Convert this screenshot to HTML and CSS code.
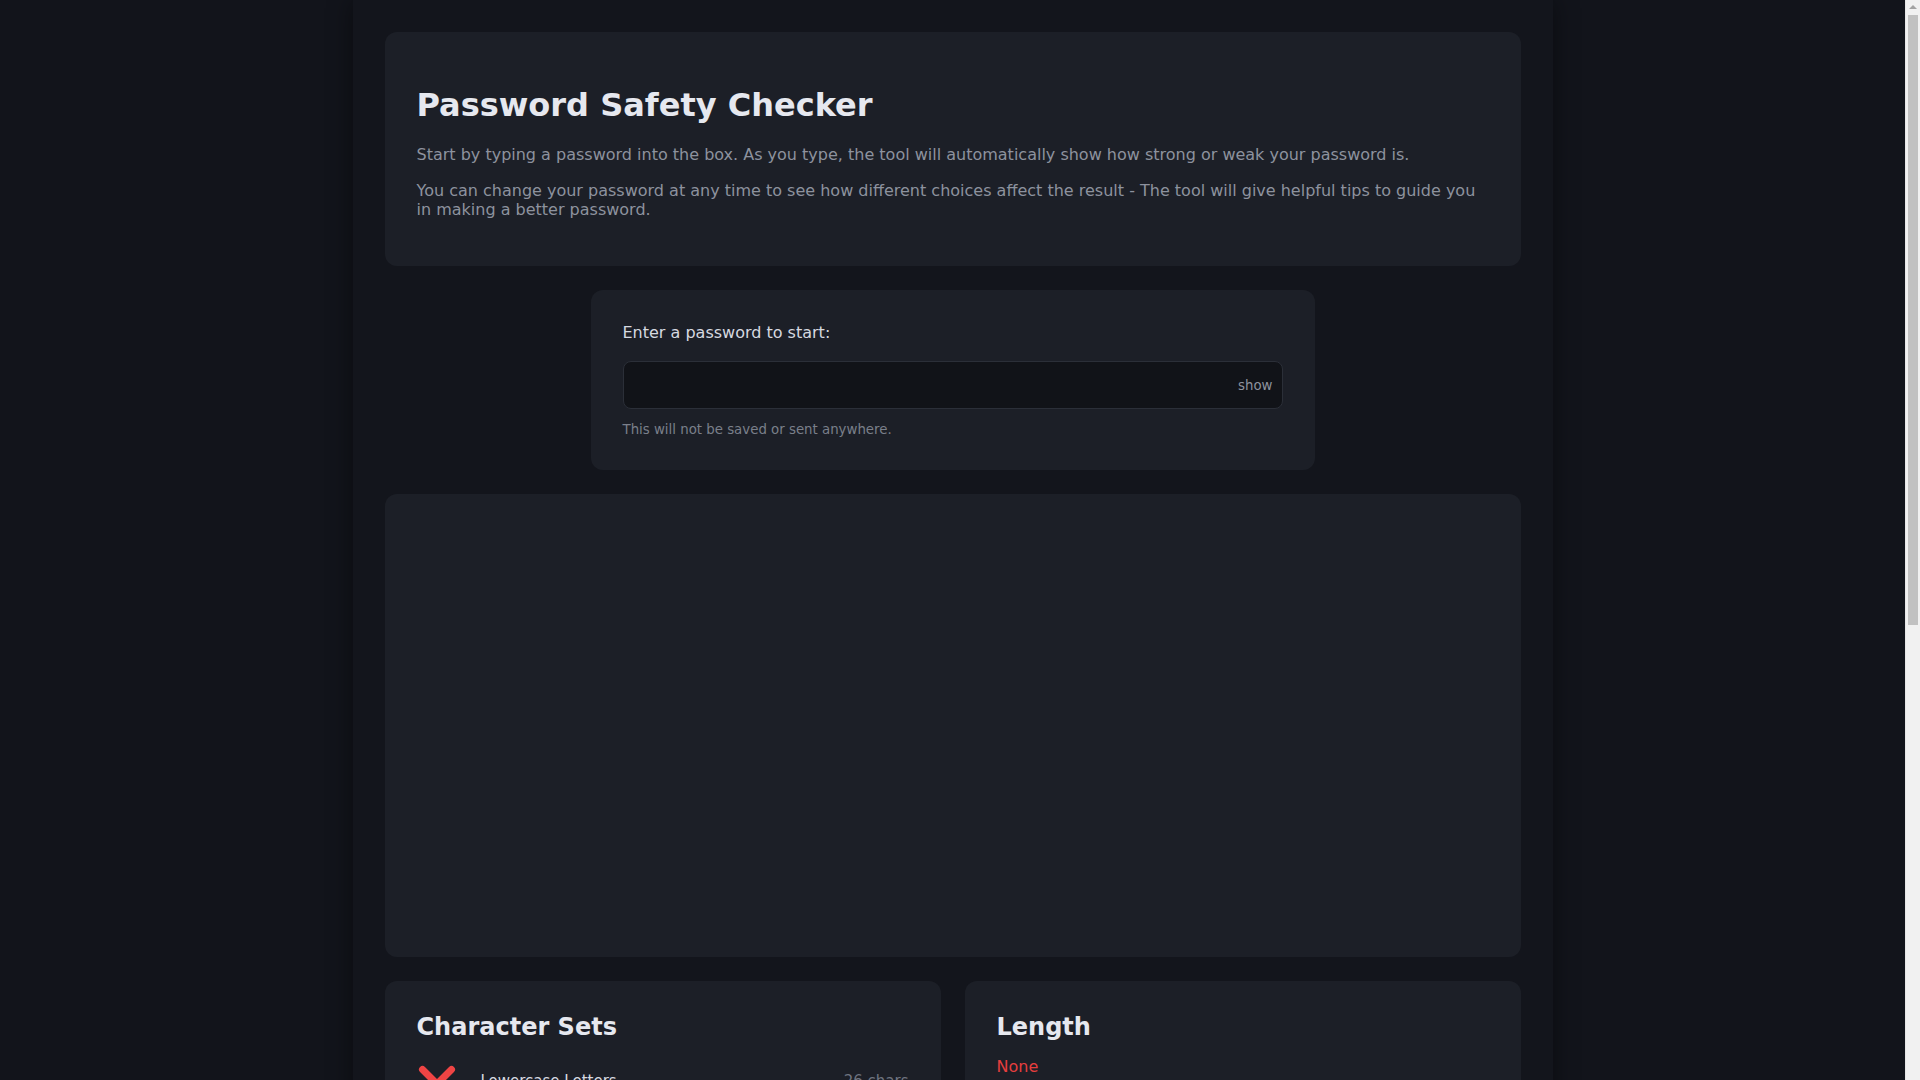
FILE: index.html
```html
<!DOCTYPE html>
<html lang="en">
<head>
<meta charset="utf-8">
<title>Password Safety Checker</title>
<link rel="stylesheet" href="styles.css">
</head>
<body>
<main class="page">
  <section class="card intro">
    <h1 class="intro-title">Password Safety Checker</h1>
    <p class="intro-text">Start by typing a password into the box. As you type, the tool will automatically show how strong or weak your password is.</p>
    <p class="intro-text">You can change your password at any time to see how different choices affect the result - The tool will give helpful tips to guide you in making a better password.</p>
  </section>

  <section class="card entry">
    <label class="entry-label" for="pw">Enter a password to start:</label>
    <div class="field">
      <input class="field-input" id="pw" type="password" autocomplete="off">
      <button class="field-toggle" type="button">show</button>
    </div>
    <p class="entry-hint">This will not be saved or sent anywhere.</p>
  </section>

  <section class="card chart"></section>

  <div class="details">
    <section class="card detail">
      <h2 class="detail-title">Character Sets</h2>
      <ul class="sets">
        <li class="set">
          <svg class="set-mark" viewBox="0 0 40 40" width="40" height="40" aria-hidden="true"><path d="M5.5 5.5 34.5 34.5M34.5 5.5 5.5 34.5" fill="none" stroke="#ef4444" stroke-width="7" stroke-linecap="round"/></svg>
          <span class="set-name">Lowercase Letters</span>
          <span class="set-size">26 chars</span>
        </li>
        <li class="set">
          <svg class="set-mark" viewBox="0 0 40 40" width="40" height="40" aria-hidden="true"><path d="M5.5 5.5 34.5 34.5M34.5 5.5 5.5 34.5" fill="none" stroke="#ef4444" stroke-width="7" stroke-linecap="round"/></svg>
          <span class="set-name">Uppercase Letters</span>
          <span class="set-size">26 chars</span>
        </li>
        <li class="set">
          <svg class="set-mark" viewBox="0 0 40 40" width="40" height="40" aria-hidden="true"><path d="M5.5 5.5 34.5 34.5M34.5 5.5 5.5 34.5" fill="none" stroke="#ef4444" stroke-width="7" stroke-linecap="round"/></svg>
          <span class="set-name">Numbers</span>
          <span class="set-size">10 chars</span>
        </li>
        <li class="set">
          <svg class="set-mark" viewBox="0 0 40 40" width="40" height="40" aria-hidden="true"><path d="M5.5 5.5 34.5 34.5M34.5 5.5 5.5 34.5" fill="none" stroke="#ef4444" stroke-width="7" stroke-linecap="round"/></svg>
          <span class="set-name">Symbols</span>
          <span class="set-size">33 chars</span>
        </li>
      </ul>
    </section>
    <section class="card detail">
      <h2 class="detail-title">Length</h2>
      <p class="length-value">None</p>
    </section>
  </div>
</main>
<div class="scrollbar" aria-hidden="true">
  <span class="scrollbar-up"></span>
  <span class="scrollbar-thumb"></span>
</div>
</body>
</html>
```

FILE: styles.css
```css
* {
  box-sizing: border-box;
}

html,
body {
  margin: 0;
  padding: 0;
}

body {
  background: #12141b;
  color: #e5e7eb;
  font-family: "DejaVu Sans", "Noto Sans", sans-serif;
  padding-right: 15px;
}

.page {
  max-width: 1200px;
  min-height: 100vh;
  margin: 0 auto;
  padding: 32px 32px 48px;
  background: #13151c;
  box-shadow: 0 0 24px rgba(0, 0, 0, 0.45);
  display: flex;
  flex-direction: column;
  gap: 24px;
}

.card {
  background: #1c1f27;
  border-radius: 12px;
  padding: 32px;
}

/* Intro */
.intro {
  padding-bottom: 29px;
}

.intro-title {
  margin: 21px 0 21px;
  font-size: 32px;
  line-height: 40px;
  font-weight: 700;
  color: #e6e8ef;
}

.intro-text {
  margin: 0 0 18px;
  font-size: 16px;
  line-height: 18.4px;
  color: #8d929e;
}

/* Entry */
.entry {
  width: 724px;
  align-self: center;
  padding-top: 33px;
  padding-bottom: 31px;
}

.entry-label {
  display: block;
  font-size: 16px;
  line-height: 20px;
  color: #d6d9e0;
  margin-bottom: 18px;
}

.field {
  display: flex;
  align-items: center;
  height: 48px;
  background: #111318;
  border: 1px solid #2b2f38;
  border-radius: 8px;
}

.field-input {
  flex: 1;
  min-width: 0;
  height: 100%;
  background: transparent;
  border: none;
  outline: none;
  color: #e5e7eb;
  font-family: inherit;
  font-size: 16px;
  padding: 0 14px;
}

.field-toggle {
  background: none;
  border: none;
  padding: 0 9px 0 10px;
  font-family: inherit;
  font-size: 13.33px;
  color: #8d929e;
  cursor: pointer;
}

.entry-hint {
  margin: 12px 0 0;
  font-size: 13.33px;
  line-height: 18px;
  color: #7a7f8a;
}

/* Chart */
.chart {
  height: 463px;
}

/* Details */
.details {
  display: grid;
  grid-template-columns: 1fr 1fr;
  gap: 24px;
}

.detail-title {
  margin: 0;
  font-size: 24px;
  line-height: 28px;
  font-weight: 700;
  color: #e6e8ef;
}

.sets {
  list-style: none;
  margin: 22.7px 0 0;
  padding: 0;
  display: flex;
  flex-direction: column;
  gap: 16px;
}

.set {
  display: flex;
  align-items: flex-start;
  gap: 24px;
}

.set-mark {
  flex: none;
  display: block;
}

.set-name {
  flex: 1;
  font-size: 15px;
  line-height: 34px;
  color: #d6d9e0;
}

.set-size {
  font-size: 15px;
  line-height: 34px;
  color: #6f7480;
}

.length-value {
  margin: 16px 0 0;
  font-size: 16px;
  line-height: 20px;
  color: #e53e3e;
}

/* Browser-style scrollbar drawn over the right edge */
.scrollbar {
  position: fixed;
  top: 0;
  right: 0;
  width: 15px;
  height: 100vh;
  background: #f1f1f1;
  border-left: 1px solid #e6e6e6;
}

.scrollbar-up {
  position: absolute;
  top: 5px;
  left: 3px;
  width: 0;
  height: 0;
  border-left: 4px solid transparent;
  border-right: 4px solid transparent;
  border-bottom: 4px solid #a3a3a3;
}

.scrollbar-thumb {
  position: absolute;
  top: 15px;
  left: 2px;
  width: 10px;
  height: 610px;
  background: #c1c1c1;
}
```
